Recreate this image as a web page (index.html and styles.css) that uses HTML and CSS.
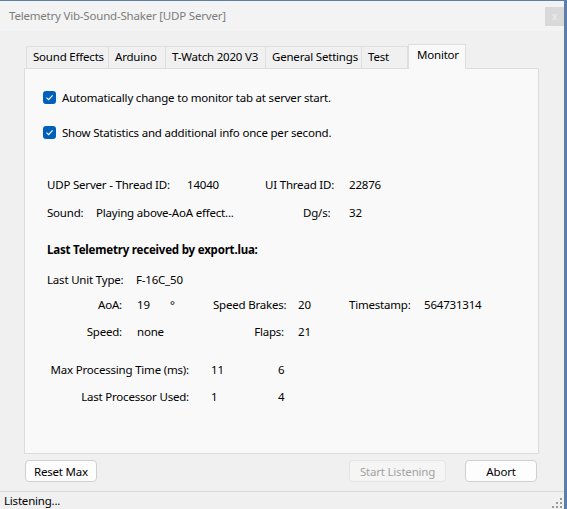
FILE: index.html
```html
<!DOCTYPE html>
<html>
<head>
<meta charset="utf-8">
<link rel="stylesheet" href="styles.css">
</head>
<body>
<div class="window">
  <div class="titlebar">
    <span class="title">Telemetry Vib-Sound-Shaker [UDP Server]</span>
    <span class="close">x</span>
  </div>
  <div class="client">
    <div class="tabs">
      <div class="tab t1">Sound Effects</div>
      <div class="tab t2">Arduino</div>
      <div class="tab t3">T-Watch 2020 V3</div>
      <div class="tab t4">General Settings</div>
      <div class="tab t5">Test</div>
      <div class="tab active">Monitor</div>
    </div>
    <div class="panel">
      <label class="check cb1"><span class="box"><svg width="9" height="9" viewBox="0 0 9 9"><path d="M1.5 4.6 L3.6 6.6 L7.6 2.4" fill="none" stroke="#fff" stroke-width="1.2"/></svg></span>Automatically change to monitor tab at server start.</label>
      <label class="check cb2"><span class="box"><svg width="9" height="9" viewBox="0 0 9 9"><path d="M1.5 4.6 L3.6 6.6 L7.6 2.4" fill="none" stroke="#fff" stroke-width="1.2"/></svg></span>Show Statistics and additional info once per second.</label>

      <div class="row r-udp">
        <span class="c-udp1">UDP Server - Thread ID:</span>
        <span class="c-udp2">14040</span>
        <span class="c-udp3">UI Thread ID:</span>
        <span>22876</span>
      </div>
      <div class="row r-sound">
        <span class="c-snd1">Sound:</span>
        <span class="c-snd2">Playing above-AoA effect...</span>
        <span class="c-snd3">Dg/s:</span>
        <span>32</span>
      </div>
      <div class="row r-head">Last Telemetry received by export.lua:</div>
      <div class="row r-unit">
        <span class="c-unit1">Last Unit Type:</span>
        <span>F-16C_50</span>
      </div>
      <div class="row grid7 r-aoa">
        <span class="lbl">AoA:</span>
        <span class="val">19</span>
        <span>°</span>
        <span class="lbl">Speed Brakes:</span>
        <span class="val2">20</span>
        <span>Timestamp:</span>
        <span>564731314</span>
      </div>
      <div class="row grid7 r-speed">
        <span class="lbl">Speed:</span>
        <span class="val">none</span>
        <span></span>
        <span class="lbl">Flaps:</span>
        <span class="val2">21</span>
        <span></span>
        <span></span>
      </div>
      <div class="row grid3 r-max">
        <span class="lbl">Max Processing Time (ms):</span>
        <span class="val">11</span>
        <span>6</span>
      </div>
      <div class="row grid3 r-proc">
        <span class="lbl">Last Processor Used:</span>
        <span class="val">1</span>
        <span>4</span>
      </div>
    </div>
    <div class="buttons">
      <button class="btn">Reset Max</button>
      <span class="spacer"></span>
      <button class="btn btn-start" disabled>Start Listening</button>
      <button class="btn btn-abort">Abort</button>
    </div>
  </div>
  <div class="status">
    <span>Listening...</span>
    <svg class="grip" width="12" height="12" viewBox="0 0 12 12">
      <rect x="9" y="1" width="2" height="2" fill="#9a9a9a"/>
      <rect x="5" y="5" width="2" height="2" fill="#9a9a9a"/>
      <rect x="9" y="5" width="2" height="2" fill="#9a9a9a"/>
      <rect x="1" y="9" width="2" height="2" fill="#9a9a9a"/>
      <rect x="5" y="9" width="2" height="2" fill="#9a9a9a"/>
      <rect x="9" y="9" width="2" height="2" fill="#9a9a9a"/>
    </svg>
  </div>
</div>
</body>
</html>
```

FILE: styles.css
```css
* { box-sizing: border-box; }
html, body { margin: 0; padding: 0; }
body {
  width: 567px;
  height: 509px;
  overflow: hidden;
  background: #5d7fa6;
  font-family: "Noto Sans", "Open Sans", sans-serif;
  font-size: 11.5px;
  letter-spacing: -0.2px;
  color: #000;
}
.window {
  width: 564px;
  height: 509px;
  margin-top: 1px;
  background: #f0f0f0;
  display: flex;
  flex-direction: column;
}
.titlebar {
  height: 30px;
  flex: none;
  background: #f3f3f3;
  display: flex;
  align-items: center;
  padding-left: 9px;
}
.title {
  flex: 1;
  color: #7c7c7c;
  margin-top: -2px;
}
.close {
  width: 19px;
  height: 19px;
  background: #d9d9d9;
  color: #efefef;
  font-size: 10px;
  line-height: 18px;
  text-align: center;
  margin-top: 0;
}
.client {
  flex: 1;
  padding: 13px 0 0 24px;
  display: flex;
  flex-direction: column;
}
.tabs {
  display: flex;
  align-items: flex-end;
  height: 24px;
  padding-left: 2px;
  position: relative;
  z-index: 1;
}
.tab {
  height: 22px;
  line-height: 20px;
  padding: 0 0 0 6px;
  border: 1px solid #dedede;
  border-bottom: none;
  border-right: none;
  background: #f0f0f0;
  white-space: nowrap;
}
.t1 { width: 82px; }
.t2 { width: 57px; }
.t3 { width: 100px; }
.t4 { width: 96px; }
.t5 { width: 47px; border-right: 1px solid #dedede; }
.active {
  width: 58px;
  height: 25px;
  line-height: 20px;
  padding-left: 8px;
  margin-bottom: -1px;
  background: #f9f9f9;
  border-right: 1px solid #dedede;
}
.panel {
  width: 515px;
  height: 386px;
  background: #f9f9f9;
  border: 1px solid #dcdcdc;
  padding: 20px 0 0 22px;
  display: flex;
  flex-direction: column;
}
.check {
  display: flex;
  align-items: center;
  height: 16px;
  white-space: nowrap;
}
.cb2 { margin-top: 19px; }
.box {
  width: 13px;
  height: 13px;
  border-radius: 3px;
  background: #005fb8;
  margin-left: -4px;
  margin-right: 6px;
  display: flex;
  align-items: center;
  justify-content: center;
}
.box svg { display: block; }
.row {
  display: flex;
  height: 16px;
  line-height: 16px;
  white-space: nowrap;
}
.r-udp { margin-top: 37px; }
.r-sound { margin-top: 12px; }
.r-head { margin-top: 21px; font-weight: bold; }
.r-unit { margin-top: 14px; }
.r-aoa { margin-top: 9px; }
.r-speed { margin-top: 11px; }
.r-max { margin-top: 22px; }
.r-proc { margin-top: 11px; }
.c-udp1 { width: 140px; }
.c-udp2 { width: 78px; }
.c-udp3 { width: 84px; }
.c-snd1 { width: 49px; }
.c-snd2 { width: 207px; }
.c-snd3 { width: 46px; }
.c-unit1 { width: 89px; }
.grid7 {
  display: grid;
  grid-template-columns: 75px 48px 43px 71px 65px 75px auto;
}
.grid3 {
  display: grid;
  grid-template-columns: 142px 89px auto;
}
.lbl { text-align: right; }
.grid7 .val { padding-left: 15px; }
.grid7 .val2 { padding-left: 14px; }
.grid3 .val { padding-left: 22px; }
.buttons {
  display: flex;
  margin-top: 6px;
  width: 513px;
  padding-left: 1px;
}
.spacer { flex: 1; }
.btn {
  font-family: inherit;
  font-size: 11.5px;
  letter-spacing: -0.2px;
  height: 22px;
  width: 72px;
  padding: 0;
  background: #fdfdfd;
  border: 1px solid #d0d0d0;
  border-radius: 4px;
  color: #000;
}
.btn-start {
  width: 97px;
  background: #f5f5f5;
  border-color: #e5e5e5;
  color: #a2a2a2;
}
.btn-abort { margin-left: 19px; }
.status {
  height: 18px;
  flex: none;
  border-top: 1px solid #dadada;
  display: flex;
  align-items: center;
  justify-content: space-between;
  padding-left: 4px;
  padding-right: 1px;
  margin-bottom: 1px;
}
.grip { display: block; margin-top: 4px; }
```
